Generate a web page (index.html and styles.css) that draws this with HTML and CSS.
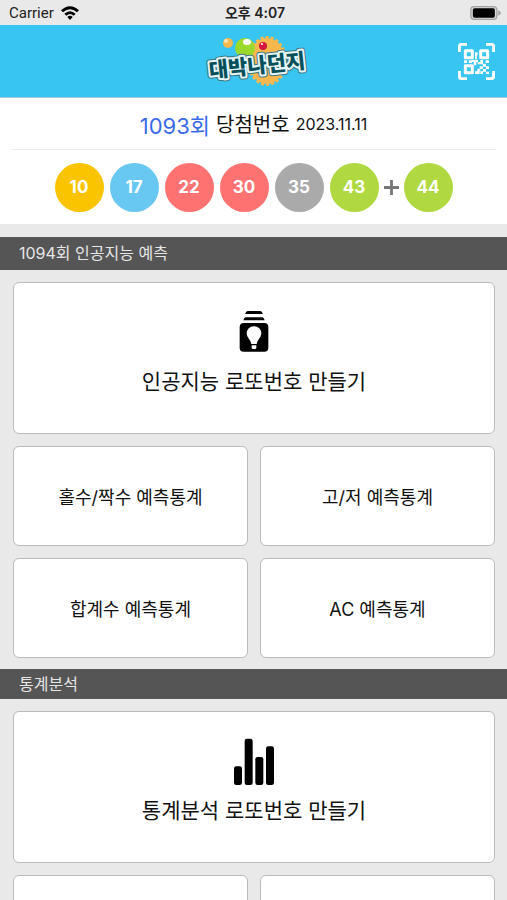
FILE: index.html
```html
<!DOCTYPE html>
<html lang="ko">
<head>
<meta charset="utf-8">
<meta name="viewport" content="width=device-width, initial-scale=1">
<title>대박나던지</title>
<link rel="stylesheet" href="styles.css">
</head>
<body>
<div class="app">
  <div class="status">
    <div class="status-left">
      <span>Carrier</span>
      <svg class="wifi" viewBox="0 0 54 42" aria-hidden="true">
        <path d="M0 13Q27-11 54 13L48 19Q27 1 6 19Z"/>
        <path d="M10 23Q27 8 44 23L38 29Q27 19 16 29Z"/>
        <path d="M19 33Q27 26 35 33L27 42Z"/>
      </svg>
    </div>
    <span class="status-time">오후 4:07</span>
    <div class="status-right">
      <svg class="battery" viewBox="0 0 92 42" aria-hidden="true">
        <rect x="2" y="2" width="78" height="38" rx="10" fill="#d8d8d8" stroke="#a2a2a2" stroke-width="4"/>
        <rect x="8" y="7" width="66" height="28" rx="5" fill="#000"/>
        <path d="M84 13Q92 16 92 21Q92 26 84 29Z" fill="#a2a2a2"/>
      </svg>
    </div>
  </div>

  <header class="topbar">
    <svg class="logo" viewBox="0 0 108 54" role="img" aria-label="대박나던지">
      <ellipse cx="67" cy="27" rx="18" ry="23" fill="#f8b84e"/>
      <ellipse cx="67" cy="27" rx="18" ry="23" fill="none" stroke="#f8b84e" stroke-width="4" stroke-dasharray="3 2"/>
      <circle cx="28" cy="9" r="5" fill="#f8b84e"/>
      <circle cx="26" cy="7" r="2" fill="#fde3b5"/>
      <circle cx="45" cy="14" r="10" fill="#9bd92d"/>
      <ellipse cx="47" cy="8" rx="4" ry="3" fill="#fff"/>
      <circle cx="63" cy="12" r="4" fill="#d3173d"/>
      <circle cx="62" cy="10" r="1" fill="#fff"/>
      <g text-anchor="middle" transform="rotate(-6 57 31)">
        <text class="logo-edge" x="57" y="39">대박나던지</text>
        <text class="logo-text" x="57" y="39">대박나던지</text>
      </g>
    </svg>
    <button class="scan" type="button" aria-label="QR">
      <svg viewBox="0 0 111 111" aria-hidden="true">
        <path d="M4 27V12Q4 4 12 4H27M84 4H99Q107 4 107 12V27M107 84V99Q107 107 99 107H84M27 107H12Q4 107 4 99V84" fill="none" stroke="#fff" stroke-width="9"/>
        <path d="M22 23H43V44H22ZM68 23H89V44H68ZM22 68H43V89H22Z" fill="none" stroke="#fff" stroke-width="9" stroke-linejoin="round"/>
        <path d="M51 28h8v9h-8zM51 37h6v11h-6zM18 52h9v8h-9zM32 52h10v8h-10zM42 50h18v7h-18zM47 57h8v10h-8zM59 57h9v7h-9zM67 51h8v13h-8zM83 52h10v8h-10zM75 62h9v9h-9zM65 70h10v8h-10zM84 70h9v8h-9zM58 77h9v8h-9zM75 78h9v8h-9zM51 85h14v8h-14zM67 85h8v8h-8zM84 86h9v7h-9z" fill="#fff"/>
      </svg>
    </button>
  </header>

  <main class="content">
    <section class="result">
      <h1 class="result-title"><span class="round">1093회</span><span>당첨번호</span><time class="date" datetime="2023-11-11">2023.11.11</time></h1>
      <div class="balls">
        <span class="ball yellow">10</span>
        <span class="ball blue">17</span>
        <span class="ball red">22</span>
        <span class="ball red">30</span>
        <span class="ball gray">35</span>
        <span class="ball green">43</span>
        <svg class="plus" viewBox="0 0 16 16" role="img" aria-label="+"><path d="M8 0V16M0 8H16"/></svg>
        <span class="ball green">44</span>
      </div>
    </section>

    <h2 class="bar bar-first">1094회 인공지능 예측</h2>
    <div class="grid">
      <button class="card wide" type="button">
        <svg class="icon" viewBox="0 0 144 144" aria-hidden="true">
          <path d="M48 10Q50 6 54 6H90Q94 6 96 10L99 15H45ZM42 29Q44 25 48 25H96Q100 25 102 29L104 34H40Z"/>
          <rect x="29" y="42" width="86" height="86" rx="12"/>
          <path d="M72 52Q82 52 88 58Q94 65 94 73Q94 82 87 90Q81 97 80 105H64Q63 97 57 90Q50 82 50 73Q50 65 56 58Q62 52 72 52ZM65 109H79V116Q79 120 75 120H69Q65 120 65 116Z" fill="#fff"/>
        </svg>
        <span>인공지능 로또번호 만들기</span>
      </button>
      <button class="card" type="button">홀수/짝수 예측통계</button>
      <button class="card" type="button">고/저 예측통계</button>
      <button class="card" type="button">합계수 예측통계</button>
      <button class="card" type="button">AC 예측통계</button>
    </div>

    <h2 class="bar">통계분석</h2>
    <div class="grid">
      <button class="card wide" type="button">
        <svg class="icon" viewBox="0 0 144 144" aria-hidden="true">
          <rect x="12" y="85" width="24" height="56" rx="7"/>
          <rect x="44" y="2" width="24" height="139" rx="7"/>
          <rect x="76" y="57" width="24" height="84" rx="7"/>
          <rect x="108" y="25" width="24" height="116" rx="7"/>
        </svg>
        <span>통계분석 로또번호 만들기</span>
      </button>
      <button class="card" type="button"></button>
      <button class="card" type="button"></button>
    </div>
  </main>
</div>
</body>
</html>
```
FILE: styles.css
```css
* {
  box-sizing: border-box;
}

body {
  margin: 0;
  background: #e9e9e9;
  color: #111;
  font-family: Inter, "Noto Sans CJK KR", sans-serif;
}

button {
  margin: 0;
  padding: 0;
  border: 0;
  background: none;
  color: inherit;
  font: inherit;
  cursor: pointer;
}

svg {
  display: block;
}

.app {
  display: flex;
  flex-direction: column;
  height: 100vh;
}

.status {
  display: grid;
  grid-template-columns: 1fr auto 1fr;
  align-items: center;
  flex: none;
  height: 25px;
  padding: 1px 6px 0 9px;
  color: #222;
  font-size: 14px;
  line-height: 20px;
}

.status-left {
  display: flex;
  align-items: center;
  gap: 7px;
  font-family: Roboto, sans-serif;
  font-size: 15px;
}

.wifi {
  width: 18px;
  height: 14px;
  fill: #000;
}

.status-time {
  font-weight: 600;
}

.status-right {
  display: flex;
  justify-content: flex-end;
}

.battery {
  width: 31px;
  height: 14px;
}

.topbar {
  display: grid;
  grid-template-columns: 1fr auto 1fr;
  align-items: center;
  flex: none;
  height: 73px;
  padding: 0 12px;
  border-bottom: 1px solid #a9c9d4;
  background: #38c5f1;
}

.logo {
  grid-column: 2;
  width: 108px;
  height: 54px;
}

.logo-edge,
.logo-text {
  fill: #07505c;
  stroke-linejoin: round;
  paint-order: stroke;
  font-size: 21px;
  font-weight: 900;
}

.logo-edge {
  stroke: #3d7480;
  stroke-width: 6px;
}

.logo-text {
  stroke: #e6f6f6;
  stroke-width: 4px;
}

.scan {
  justify-self: end;
  width: 37px;
  height: 37px;
}

.content {
  flex: 1;
  min-height: 0;
  overflow-y: auto;
  scrollbar-width: none;
}

.result {
  padding: 0 11px 12px;
  background: #fff;
}

.result-title {
  display: flex;
  align-items: center;
  justify-content: center;
  gap: 6px;
  height: 52px;
  margin: 0;
  border-bottom: 1px solid #ededed;
  font-size: 20px;
  font-weight: 400;
}

.round {
  color: #3b6be8;
  font-size: 22px;
}

.date {
  font-size: 16px;
}

.balls {
  display: flex;
  align-items: center;
  justify-content: center;
  gap: 6px;
  padding-top: 13px;
}

.ball {
  width: 49px;
  height: 49px;
  border-radius: 50%;
  color: #fff;
  font-size: 17px;
  font-weight: 700;
  line-height: 49px;
  text-align: center;
}

.yellow { background: #fac400; }
.blue { background: #69c8f2; }
.red { background: #ff7272; }
.gray { background: #aaa; }
.green { background: #b0d840; }

.plus {
  width: 15px;
  height: 15px;
  margin: 0 -1px;
  stroke: #777;
  stroke-width: 3px;
}

.bar {
  height: 30px;
  margin: 0;
  padding: 0 19px;
  background: #555;
  color: #e6e6e6;
  font-size: 16px;
  font-weight: 400;
  line-height: 30px;
}

.bar-first {
  height: 33px;
  margin-top: 13px;
  line-height: 33px;
}

.grid {
  display: grid;
  grid-template-columns: 1fr 1fr;
  grid-template-rows: 152px;
  grid-auto-rows: 100px;
  gap: 12px;
  padding: 12px 12px 11px 13px;
}

.card {
  border: 1px solid #bbb;
  border-radius: 6px;
  background: #fff;
  font-size: 18px;
}

.wide {
  display: flex;
  flex-direction: column;
  align-items: center;
  grid-column: 1 / -1;
  padding-top: 26px;
  font-size: 21px;
  line-height: 30px;
}

.icon {
  width: 48px;
  height: 48px;
  margin-bottom: 10px;
}
```
